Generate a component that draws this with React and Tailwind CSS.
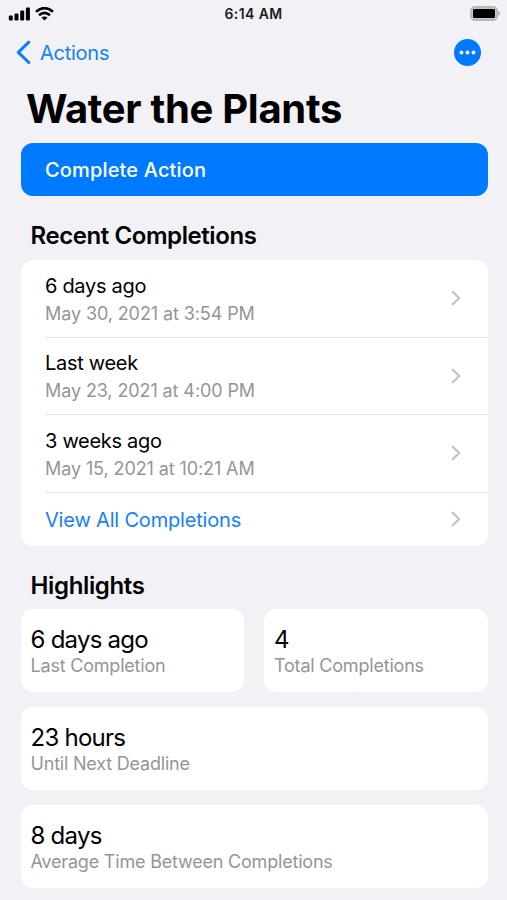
const completions = [
  { title: '6 days ago', date: 'May 30, 2021 at 3:54 PM' },
  { title: 'Last week', date: 'May 23, 2021 at 4:00 PM' },
  { title: '3 weeks ago', date: 'May 15, 2021 at 10:21 AM' },
]

function Chevron() {
  return (
    <svg width="10" height="16" viewBox="0 0 10 16" fill="none" className="shrink-0">
      <path d="M1.7 1.8L8.2 8l-6.5 6.2" stroke="#c2c2c4" strokeWidth="2.2" strokeLinecap="round" strokeLinejoin="round" />
    </svg>
  )
}

function StatusBar() {
  return (
    <div className="grid h-[27px] grid-cols-3 items-center pl-2 pr-[6px]">
      <div className="flex items-center gap-1">
        <svg width="23" height="14" viewBox="0 0 23 14" fill="#000">
          <rect x="0.8" y="8.5" width="4" height="5" rx="1.2" />
          <rect x="6.5" y="6.5" width="4" height="7" rx="1.2" />
          <rect x="12.2" y="3.5" width="4" height="10" rx="1.2" />
          <rect x="17.9" y="0.5" width="4" height="13" rx="1.2" />
        </svg>
        <svg width="19" height="14" viewBox="0 0 19 14" fill="none" stroke="#000" strokeWidth="2.6">
          <path d="M1 4.7Q9.5-2.4 18 4.7" />
          <path d="M4 8.2Q9.5 3.7 15 8.2" />
          <path d="M6.5 10.6Q9.5 8.6 12.5 10.6L9.5 13.6Z" fill="#000" stroke="none" />
        </svg>
      </div>
      <span className="pr-[2px] text-center text-[14px] font-semibold tracking-[0.4px] text-[#1c1c1e]">6:14 AM</span>
      <svg width="31" height="15" viewBox="0 0 31 15" className="justify-self-end">
        <rect x="1" y="1" width="26" height="13" rx="3.8" fill="#c8c8ca" stroke="#b8b8ba" strokeWidth="1.8" />
        <rect x="3" y="3" width="22" height="9" rx="1.2" />
        <path d="M28 5Q32 7.5 28 10Z" fill="#b0b0b3" />
      </svg>
    </div>
  )
}

function Stat({ value, label }) {
  return (
    <div className="flex h-[83px] flex-col rounded-xl bg-white px-[10px] pt-[17px]">
      <span className="text-[24px] leading-[28px] tracking-[-0.75px]">{value}</span>
      <span className="text-[18px] leading-[23px] tracking-[-0.2px] text-[#959597]">{label}</span>
    </div>
  )
}

export default function App() {
  return (
    <div className="h-[900px] overflow-hidden bg-[#f1f1f6] font-[Inter,sans-serif] text-black">
      <StatusBar />

      <nav className="flex h-[51px] items-center justify-between pl-[15px] pr-[26px]">
        <button className="flex items-center gap-[9px] text-[20px] tracking-[-0.25px] text-[#1480fc]">
          <svg width="16" height="25" viewBox="0 0 16 25" fill="none">
            <path d="M13.8 2.2L3.3 12.3l10.5 10.2" stroke="#0a7cff" strokeWidth="3" strokeLinecap="round" strokeLinejoin="round" />
          </svg>
          Actions
        </button>
        <svg width="27" height="27" viewBox="0 0 27 27">
          <circle cx="13.5" cy="13.5" r="13.5" fill="#007aff" />
          <circle cx="7.5" cy="13.5" r="1.9" fill="#fff" />
          <circle cx="13.5" cy="13.5" r="1.9" fill="#fff" />
          <circle cx="19.5" cy="13.5" r="1.9" fill="#fff" />
        </svg>
      </nav>

      <main className="pl-[20.5px] pr-[19.5px]">
        <h1 className="flex h-[65px] items-center pb-1 pl-[5.5px] text-[40px] font-bold tracking-[-0.3px]">Water the Plants</h1>
        <button className="h-[53px] w-full rounded-xl bg-[#007aff] px-[24.5px] text-left text-[20px] font-medium tracking-[0.15px] text-white">
          Complete Action
        </button>

        <h2 className="flex h-16 items-center pl-[10px] pt-4 text-[24px] font-semibold leading-8 tracking-[-0.42px]">Recent Completions</h2>
        <div className="rounded-xl bg-white pl-[24.5px]">
          {completions.map((item) => (
            <div key={item.title} className="flex h-[77.5px] items-center justify-between border-b border-[#e6e6e8] pr-[27px]">
              <div className="flex flex-col pt-[3px]">
                <span className="text-[20px] leading-[27px] tracking-[-0.3px]">{item.title}</span>
                <span className="text-[18px] leading-[27px] tracking-[-0.1px] text-[#959597]">{item.date}</span>
              </div>
              <Chevron />
            </div>
          ))}
          <div className="flex h-[53px] items-center justify-between pr-[27px]">
            <span className="pt-px text-[20px] tracking-[-0.18px] text-[#1480fc]">View All Completions</span>
            <Chevron />
          </div>
        </div>

        <h2 className="flex h-[63.5px] items-center pl-[10px] pt-[17px] text-[24px] font-semibold leading-8 tracking-[-0.35px]">Highlights</h2>
        <div className="grid grid-cols-2 gap-x-5 gap-y-[15px]">
          <Stat value="6 days ago" label="Last Completion" />
          <Stat value="4" label="Total Completions" />
          <div className="col-span-2">
            <Stat value="23 hours" label="Until Next Deadline" />
          </div>
          <div className="col-span-2">
            <Stat value="8 days" label="Average Time Between Completions" />
          </div>
        </div>
      </main>
    </div>
  )
}
